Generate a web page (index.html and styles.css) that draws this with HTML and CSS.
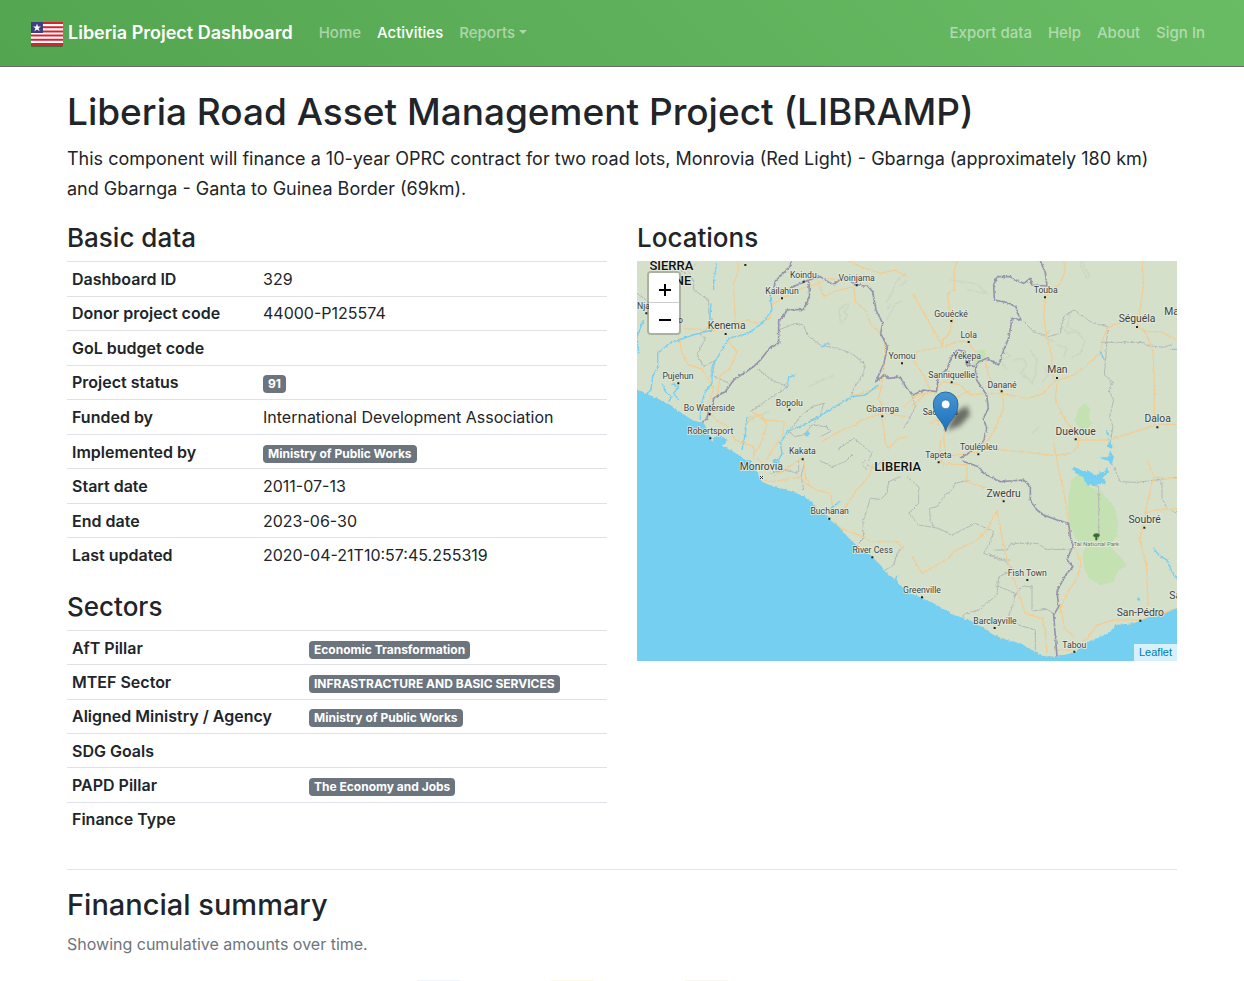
FILE: index.html
```html
<!DOCTYPE html>
<html lang="en">
<head>
<meta charset="utf-8">
<meta name="viewport" content="width=device-width, initial-scale=1">
<title>Liberia Project Dashboard</title>
<link rel="stylesheet" href="styles.css">
</head>
<body>
<nav class="navbar">
  <a class="brand" href="#">
    <svg class="flag" viewBox="0 0 32 28" aria-hidden="true">
      <rect x="0" y="4" width="32" height="24" rx="1" fill="#3a7338"/>
      <rect x="0" y="3" width="32" height="23" rx="1" fill="#fff"/>
      <path d="M0 4h32M0 8.200h32M0 12.400h32M0 16.500h32M0 20.700h32M0 24.900h32" stroke="#d9212f" stroke-width="2"/>
      <rect x="0" y="3" width="12" height="11" fill="#3f3f7d"/>
      <path d="M6 4.500l1 3h3l-2.400 1.800 1 3L6 10.500l-2.600 1.800 1-3L2 7.500h3z" fill="#fff"/>
    </svg>
    <span>Liberia Project Dashboard</span>
  </a>
  <ul class="nav">
    <li><a href="#">Home</a></li>
    <li><a class="active" href="#">Activities</a></li>
    <li><a class="dropdown" href="#">Reports</a></li>
  </ul>
  <ul class="nav nav-end">
    <li><a href="#">Export data</a></li>
    <li><a href="#">Help</a></li>
    <li><a href="#">About</a></li>
    <li><a href="#">Sign In</a></li>
  </ul>
</nav>
<main class="container">
  <h1>Liberia Road Asset Management Project (LIBRAMP)</h1>
  <p class="lead">This component will finance a 10-year OPRC contract for two road lots, Monrovia (Red Light) - Gbarnga (approximately 180 km) and Gbarnga - Ganta to Guinea Border (69km).</p>
  <div class="columns">
    <div>
      <h3>Basic data</h3>
      <table class="table basic">
        <tr><th scope="row">Dashboard ID</th><td>329</td></tr>
        <tr><th scope="row">Donor project code</th><td>44000-P125574</td></tr>
        <tr><th scope="row">GoL budget code</th><td></td></tr>
        <tr><th scope="row">Project status</th><td><span class="badge">91</span></td></tr>
        <tr><th scope="row">Funded by</th><td>International Development Association</td></tr>
        <tr><th scope="row">Implemented by</th><td><span class="badge">Ministry of Public Works</span></td></tr>
        <tr><th scope="row">Start date</th><td>2011-07-13</td></tr>
        <tr><th scope="row">End date</th><td>2023-06-30</td></tr>
        <tr><th scope="row">Last updated</th><td>2020-04-21T10:57:45.255319</td></tr>
      </table>
      <h3>Sectors</h3>
      <table class="table sectors">
        <tr><th scope="row">AfT Pillar</th><td><span class="badge">Economic Transformation</span></td></tr>
        <tr><th scope="row">MTEF Sector</th><td><span class="badge">INFRASTRACTURE AND BASIC SERVICES</span></td></tr>
        <tr><th scope="row">Aligned Ministry / Agency</th><td><span class="badge">Ministry of Public Works</span></td></tr>
        <tr><th scope="row">SDG Goals</th><td></td></tr>
        <tr><th scope="row">PAPD Pillar</th><td><span class="badge">The Economy and Jobs</span></td></tr>
        <tr><th scope="row">Finance Type</th><td></td></tr>
      </table>
    </div>
    <div>
      <h3>Locations</h3>
      <div class="map">
        <svg class="tiles" viewBox="0 3 1620 1200" preserveAspectRatio="xMidYMid slice">
          <defs>
            <linearGradient id="pin" x1="0" y1="0" x2="0" y2="1"><stop offset="0" stop-color="#4596d2"/><stop offset="1" stop-color="#1c70bd"/></linearGradient>
            <filter id="soft" x="-50%" y="-50%" width="200%" height="200%"><feGaussianBlur stdDeviation="8"/></filter>
            <filter id="rough" filterUnits="userSpaceOnUse" x="-20" y="-20" width="1660" height="1250"><feTurbulence type="fractalNoise" baseFrequency="0.12" numOctaves="2" seed="4"/><feDisplacementMap in="SourceGraphic" scale="9" xChannelSelector="R" yChannelSelector="G"/></filter>
          </defs>
          <rect y="0" width="1620" height="1210" fill="#d5e0cb"/>
          <!-- hills -->
          <g class="hills" filter="url(#rough)">
            <path d="M605 150l25-20 5 10-12 15 8 15-20 20zM745 130l20-30 12-35 30-25M750 180l25-50 20-5M750 150l12-20M790 80l18-18M590 345l-45 20-30 15M330 475l40-10 30-12M1130 300l30-5 10 20-20 25 18 15M1180 270l20 30-5 40M1270 190l20 30 30-5 20 25M1300 160l-10 40 40 20M1220 320l15 25-20 20M1345 240l-15 40-30 15M1160 340l25 30 12-30M940 60l80 12 30 28-60-10M1330 0l30 50-10 5-20-40M1185 520l20-18M180 10l-30 20 12 15M1100 270l20 20-30 10 20 30M1260 255l30 10-10 25M1240 210l-20 20 30 15"/>
          </g>
          <!-- forest -->
          <g fill="#c3e1b1" filter="url(#rough)">
            <path d="M1330 635L1350 650 1358 680 1395 695 1410 715 1435 745 1443 790 1440 825 1418 860 1450 890 1470 915 1445 930 1430 965 1390 976 1355 955 1342 920 1335 885 1348 860 1318 842 1300 800 1293 750 1295 700 1305 660z"/>
            <path d="M1325 445l20-15 15 20-5 30 12 10-25 25-18-15-12-15zM1010 285l20-18 18 5-5 25-25 22-12-8z"/>
          </g>
          <!-- secondary boundaries -->
          <g class="minor" filter="url(#rough)">
            <path d="M130 30l40 30 0 30 45 30 0 40 15 30-25 20-15 15 15 10-25 50 20 35 35-20-10 45 50 25M425 210l50-20 25 5 10 30 40 30 50 10 45 15 40 35-10 35-25 35-8 30M360 325l45 35 45 20M450 380l-110 75M455 515l35-45 35-30 35-10-10 35-15 20M455 515l20 15 25-5 25-30 45 5 10 15-30 15M600 570l50-35 25 20 30 25-10 20M545 600l40 20 40-15 20-20M690 630l-15-20 15-10M790 650l-35 15-5 35-20 18-30-3-12 40-10 30 2 50-15 15"/>
            <path d="M0 100l40 30M1160 185l30 30 45 15 35-10 10-50 30-20 50 35 30 10 22 5-5 85-5 60 25 20-12 25 15 30-12 50 10 30-10 60M1392 247h120l20 10 50 5 25-10M820 390l15 50-15 30-20 35M995 660l-40 10-10 20-25 20-20 30-22 5 2 40 12 15M810 650l35 30 0 50-30 30 30 35 60 10 40 20 70-35 55 25-10 30-20 35 60 20 30 30-45 20-5 55-55 45-40 10-40 40M1070 870l40 0 12-20 80 0 25 18 80 0M1120 900h-35l-30-20M1075 975l60 25-5 30-15 35 30 30 50 15 0 60M1185 1050v-70l-30 0-25 30M1250 1060l-20-12-45 5M800 860l-20 20-10 35-25 15M1385 840v-160l-35-10 0-30M1420 600l30 65 50 2 120-15M1575 665v50l15 30 30 15M400 640l40-10 45 10v-40M500 690l-8-40 10-40M740 600l-30 25-20-10"/>
          </g>
          <!-- roads -->
          <g class="roads" filter="url(#rough)">
            <path d="M300 0l5 30-15 40 5 120-40 15-40 5-80-5M300 190l30-10 30 10 40-15 5-40 30-20 60-30 50-15 30-15 50 8M540 60l20 50 30-15 60-15 5 45 30 25 15 40 40 40 5 60-10 80-10 45 10 20 0 50M125 230l10 50 20 35 40 12 25 40 10 20-15 40 0 25 25 30 30 15 25 45M270 240l30 35-20 50-30 20-10 60M325 490l45-30 20 35-20 60-20 30M345 455l35 25 62 5-5 40-20 30-30 45M735 460l-60 20-20 15-50 20-50 30M740 460l70 10M735 470l10 80 10 15 30-30 25-5M630 0l40 20 60 20 45-10 35 20M740 380l-100 30M350 600l0-40-55-20"/>
            <path d="M960 0l-8 30 0 60-20 10 5 50 10 20-10 50-20 20 0 20-90-160M920 260l-80 15-10 30 30 40 20 45-60 50M925 260l30-15 40 0 10 20 40 35 10 50 40 50M800 440l40-35 50-10 30-30 50 10 30 30 50-5 40 0 80 15 50-15 30-35 60-20 40-30 40-35 10-50 10-25 30-15 45-8M895 400l10 100M880 490l50-30 30-50 40-20M1095 395l5 50-30 70-40 60-110 15M1280 0l5 30-15 40-45 40-5 60 10 60 15 60 0 50 15 30-5 50 30 60 40 50-2 30-20 20-50 7-80-10-110-10M1315 540l100 0 110-35 36-12 59 0M1515 0l5 70-18 130 25 20 20 50 5 80 0 140M1500 200l30 15 40 0 50 25M1250 550l15 80 15 60 10 70 10 70 32 80-10 40-40 65-10 30 10 60 30 25M1530 600l20 50-20 80-10 60-12 50 20 70 5 130-10 30M1520 760l40-10 60-5M1550 650l40 5 30 0M925 590l-5-60 5-40M920 580l-5 30 75 5 0 50 60 20 50 35M1080 750l15 80 10 50 20 60 20 60 20 60 50 15 10 40 5 65M1080 750l-30 60-30 30-70 35-15 20-80 45-30-50M800 870l-20-25-80 0-20-15-70-25-20-25M600 770l30-35 25-40 40-45 15-40M380 660l30 5 80-15 15 20 35 20 40 10 10 60M410 650l40-25 50-35M500 600l5 50 15 30M1250 1170l50 0 50-35 30-40 50-15 80 0 40-15 70-20M910 540l0 50 10 30M390 625l-30-30"/>
          </g>
          <!-- rivers -->
          <g class="rivers" filter="url(#rough)">
            <path d="M240 10l-10 50 0 30M222 130l-5 60 10 20-60 15-70 25-35 30 0 40-15 30-5 40-30 30M20 180l-20 50 5 50M400 110l5 40-30 40-40 30-60 15-20 35-30 50 0 50-20 25-15 45 0 40M475 343l-20 10-5 35M725 375l-40 30-40 5-60 35-40 25-45 25-50 20-20 35 5 30-10 20M330 470l-5 50-10 50M555 262l12-10 12 0M75 370l10 25 20 15-10 15M105 370l20 10-15 20 15 20M580 745l30-20M1390 275l12 25M1550 865l15 20 25 15 15 35 15 20M1600 268h20M775 960l5-15M430 685l40 15 35 12"/>
          </g>
          <!-- national borders -->
          <g class="border" filter="url(#rough)">
            <path d="M195 488l15-12 5-25 10-8 5-28 15-10 20-10 25-35 60-40 20-20 30-38 25-12v-70l15-12 10-18 50-2 10-20 8-22-3-46 35-10 30 20 15 0 25-20 30 20 30 8 12 0 15 17 10 55 20 40-6 30 20 40-10 50-25 55 25-20 15 10 33-5 20 35 20 20 30-15 40 5 5-50 25-15 15-40 20-20 20 5 5 40 25 5 5 40 30 45 5 40-15 30 10 30-10 40-45 35-25 15"/>
            <path d="M975 603l50 17 15 20 50 25 70-5 20 20 0 40 20 30 20 15 40 15 35 10 5 40 8 25-18 45 18 20-23 25-25 50 5 45-15 25 5 65 5 60"/>
            <path d="M462 3l-2 15-25 25-20 20-5 25-10 20M450 90l30-15 35-15M1210 3l15 35 5 40-45-3-5-20-20 15-20-8-20-12-40 0-10 25 2 45 40 8 25 12 5 20 10 20-27-5-10 60-15 35-15 45-35-20-25 10-10 20M990 280l10 40"/>
          </g>
          <!-- sea and lakes -->
          <g fill="#75cff0" filter="url(#rough)">
            <path d="M-20 380l80 35 40 20 35 25 30 20 35 10 15 25 5 25 30 15 40 20 35 25 15 0 25 45 10 20 35 15 40 10 40 15 35 20 15 20 20 10 20 25 30 25 30 35 25 20 35 25 30 30 15 20 25 20 15 15 25 27 45 16 35 17 60 35 60 20 30 20 30 20 40 15 40 10 35 20 30 17 45 3 60-15 20-25 50-18 30-17 15-20 55-5 50-20 35-8 65-25V1230H-20z"/>
            <path d="M230 530l20-3 20 10-5 15-15 5-20-12zM500 522l15-8 5 8-12 8zM405 600l15-5 12 15-15 10z"/>
            <path d="M1405 512l8 3 2 25 12 20-8 12 12 18-6 20-14 10 2 20-14 12 8 18-36 6-22-2-10-22-22-12-14-14 10-6 22 12 24 2 22 14 6-12 16 4 4-16 14-12-6-10-24-6 0-6 22 2 8-24-10-10 8-16z"/>
            <path d="M1500 1013l8 0 2 10-8-3z"/>
          </g>
          <path d="M1371 830c-10-12 26-12 14 0h-5v10h-4v-10z" fill="#386b31" stroke="#386b31" stroke-width="2"/>
          <g fill="#222">
            <path d="M322 12h6v6h-6zM432 112h6v6h-6zM497 62h6v6h-6zM656 73h6v6h-6zM263 219h6v6h-6zM121 367h6v6h-6zM215 460h6v6h-6zM217 532h6v6h-6zM454 446h6v6h-6zM733 466h6v6h-6zM494 595h6v6h-6zM792 307h6v6h-6zM940 180h6v6h-6zM992 243h6v6h-6zM988 304h6v6h-6zM941 364h6v6h-6zM1091 391h6v6h-6zM1221 109h6v6h-6zM1497 198h6v6h-6zM1257 351h6v6h-6zM1558 499h6v6h-6zM1313 535h6v6h-6zM1021 580h6v6h-6zM902 604h6v6h-6zM1097 721h6v6h-6zM574 773h6v6h-6zM703 889h6v6h-6zM852 1009h6v6h-6zM1070 1101h6v6h-6zM1168 957h6v6h-6zM1309 1172h6v6h-6zM1507 1079h6v6h-6zM1519 800h6v6h-6zM25 157h6v6h-6z"/>
            <path d="M368 647h11v11h-11z" fill="#fff"/><path d="M369 648l9 9M378 648l-9 9" stroke="#222" stroke-width="3"/>
          </g>
          <g class="labels">
            <g class="country"><text x="103" y="30">SIERRA</text><text x="103" y="74">LEONE</text><text x="782" y="634">LIBERIA</text></g>
            <g class="town">
              <text x="499" y="54">Koindu</text><text x="659" y="62">Voinjama</text><text x="435" y="102">Kailahun</text><text x="123" y="357">Pujehun</text><text x="217" y="452">Bo Waterside</text><text x="220" y="521">Robertsport</text><text x="457" y="437">Bopolu</text><text x="737" y="455">Gbarnga</text><text x="496" y="583">Kakata</text><text x="795" y="298">Yomou</text><text x="942" y="171">Gouécké</text><text x="995" y="235">Lola</text><text x="990" y="298">Yekepa</text><text x="944" y="355">Sanniquellie</text><text x="1095" y="383">Danané</text><text x="910" y="465">Saclepea</text><text x="1025" y="571">Toulépleu</text><text x="904" y="595">Tapeta</text><text x="707" y="879">River Cess</text><text x="1171" y="949">Fish Town</text><text x="855" y="999">Greenville</text><text x="1074" y="1091">Barclayville</text><text x="1226" y="99">Touba</text><text class="start" x="0" y="148">Njala</text><text x="578" y="762">Buchanan</text><text x="1312" y="1163">Tabou</text><text x="122" y="188">Bo</text>
            </g>
            <g class="city"><text x="269" y="207">Kenema</text><text x="373" y="631">Monrovia</text><text x="1500" y="187">Séguéla</text><text x="1261" y="340">Man</text><text x="1316" y="525">Duekoue</text><text x="1562" y="487">Daloa</text><text x="1100" y="711">Zwedru</text><text x="1523" y="788">Soubré</text><text x="1510" y="1067">San-Pédro</text><text class="start" x="1582" y="164">Ma</text><text class="start" x="1597" y="1016">Sa</text></g>
            <text class="park" x="1378" y="859">Taï National Park</text>
          </g>
          <path d="M928 512l25-55 38-20 8 28-30 32z" fill="#222" opacity=".6" filter="url(#soft)"/>
          <path d="M926 514C921 484 889 472 889 432a37 36 0 0 1 74 0C963 472 931 484 926 514z" fill="url(#pin)" stroke="#2e6c97" stroke-width="3"/>
          <circle cx="926" cy="433" r="13" fill="#fff" stroke="#2e6c97" stroke-width="2"/>
        </svg>
        <div class="zoom">
          <button type="button" aria-label="Zoom in"><svg viewBox="0 0 14 14"><path d="M1 7h12M7 1v12"/></svg></button>
          <button type="button" aria-label="Zoom out"><svg viewBox="0 0 14 14"><path d="M1 7h12"/></svg></button>
        </div>
        <div class="attribution"><a href="#">Leaflet</a></div>
      </div>
    </div>
  </div>
  <hr>
  <h2>Financial summary</h2>
  <p class="muted">Showing cumulative amounts over time.</p>
  <div class="legend"><i class="blue"></i><i class="yellow"></i><i class="green"></i></div>
</main>
</body>
</html>
```

FILE: styles.css
```css
* { box-sizing: border-box; }
body {
  margin: 0;
  background: #fff;
  color: #212529;
  font: 400 16px/24px Inter, "Liberation Sans", sans-serif;
}
a { text-decoration: none; }
.navbar {
  display: flex;
  align-items: center;
  padding: 13px 31px;
  background: linear-gradient(45deg, #54a550, #69bb64);
  border-bottom: 1px solid #6b6b6b;
}
.brand {
  display: flex;
  align-items: center;
  gap: 5px;
  margin-right: 18px;
  color: #fff;
  font-size: 18px;
  line-height: 30px;
  font-weight: 600;
}
.flag { width: 32px; height: 28px; }
.nav {
  display: flex;
  margin: 0;
  padding: 0;
  list-style: none;
}
.nav a {
  display: block;
  padding: 8px;
  color: rgba(255, 255, 255, .5);
  font-size: 15px;
  font-weight: 500;
}
.nav a.active { color: #fff; }
.nav-end { margin-left: auto; }
.dropdown::after {
  content: "";
  display: inline-block;
  margin-left: 4px;
  vertical-align: 4px;
  border: 4px solid transparent;
  border-top-color: currentColor;
  border-bottom: 0;
}
.container {
  max-width: 1140px;
  margin: 0 auto;
  padding: 21px 15px 0;
}
h1, h2, h3 { margin: 0 0 8px; font-weight: 500; }
h1 { font-size: 37px; line-height: 48px; }
h2 { font-size: 29px; line-height: 38px; }
h3 { padding-top: 2px; font-size: 26px; line-height: 31px; }
p { margin: 0 0 16px; }
.lead { font-size: 18px; line-height: 30px; }
.muted { color: #6c757d; }
.columns {
  display: grid;
  grid-template-columns: 1fr 1fr;
  gap: 30px;
}
.table {
  width: 100%;
  margin-bottom: 17px;
  border-collapse: separate;
  border-spacing: 0;
}
.basic { height: 311px; }
.sectors { height: 206px; }
.table th, .table td {
  padding: 4px 5px;
  border-top: 1px solid #dee2e6;
  text-align: left;
  vertical-align: middle;
}
.table th { font-weight: 600; white-space: nowrap; }
.basic th { width: 191px; }
.sectors th { width: 237px; }
.badge {
  display: inline-block;
  padding: 3px 5px;
  border-radius: 4px;
  background: #6c757d;
  color: #fff;
  font-size: 12px;
  line-height: 12px;
  font-weight: 700;
  white-space: nowrap;
}
.map { position: relative; height: 400px; overflow: hidden; }
.tiles { display: block; width: 100%; height: 100%; }
.hills { fill: none; stroke: #c8d3bf; stroke-width: 5; opacity: .6; }
.minor { fill: none; stroke: #b3b8b5; stroke-width: 3; }
.roads { fill: none; stroke: #f2cd93; stroke-width: 4; stroke-linejoin: round; }
.rivers { fill: none; stroke: #75cff0; stroke-width: 4; }
.border { fill: none; stroke: #9694ac; stroke-width: 5; stroke-linejoin: round; }
.labels {
  fill: #3c3f40;
  stroke: #e4ebdf;
  stroke-width: 5;
  paint-order: stroke;
  text-anchor: middle;
  font-family: Roboto, sans-serif;
}
.country { font-size: 39px; font-weight: 500; fill: #111; }
.town { font-size: 26px; }
.city { font-size: 31px; }
.start { text-anchor: start; }
.park { font-size: 18px; fill: #5d7f59; }
.zoom {
  position: absolute;
  top: 10px;
  left: 10px;
  border: 2px solid rgba(0, 0, 0, .2);
  border-radius: 4px;
  background-clip: padding-box;
}
.zoom button {
  display: grid;
  place-items: center;
  width: 30px;
  height: 30px;
  padding: 0;
  border: 0;
  background: #fff;
}
.zoom button:first-child { border-bottom: 1px solid #ccc; border-radius: 2px 2px 0 0; }
.zoom button:last-child { border-radius: 0 0 2px 2px; }
.zoom svg { width: 14px; height: 14px; margin: 4px 0 0 2px; fill: none; stroke: #000; stroke-width: 2; }
.attribution {
  position: absolute;
  right: 0;
  bottom: 0;
  padding: 0 5px;
  background: rgba(255, 255, 255, .7);
  font: 11px/17px "Liberation Sans", sans-serif;
}
.attribution a { color: #0078a8; }
hr { margin: 16px 0; border: 0; border-top: 1px solid #e5e5e5; }
.legend {
  display: flex;
  justify-content: center;
  gap: 91px;
  padding: 8px 100px 0 0;
}
.legend i { width: 43px; height: 1px; }
.blue { background: #ebf5fd; }
.yellow { background: #fff8e3; }
.green { background: #f7f8e9; }
```
